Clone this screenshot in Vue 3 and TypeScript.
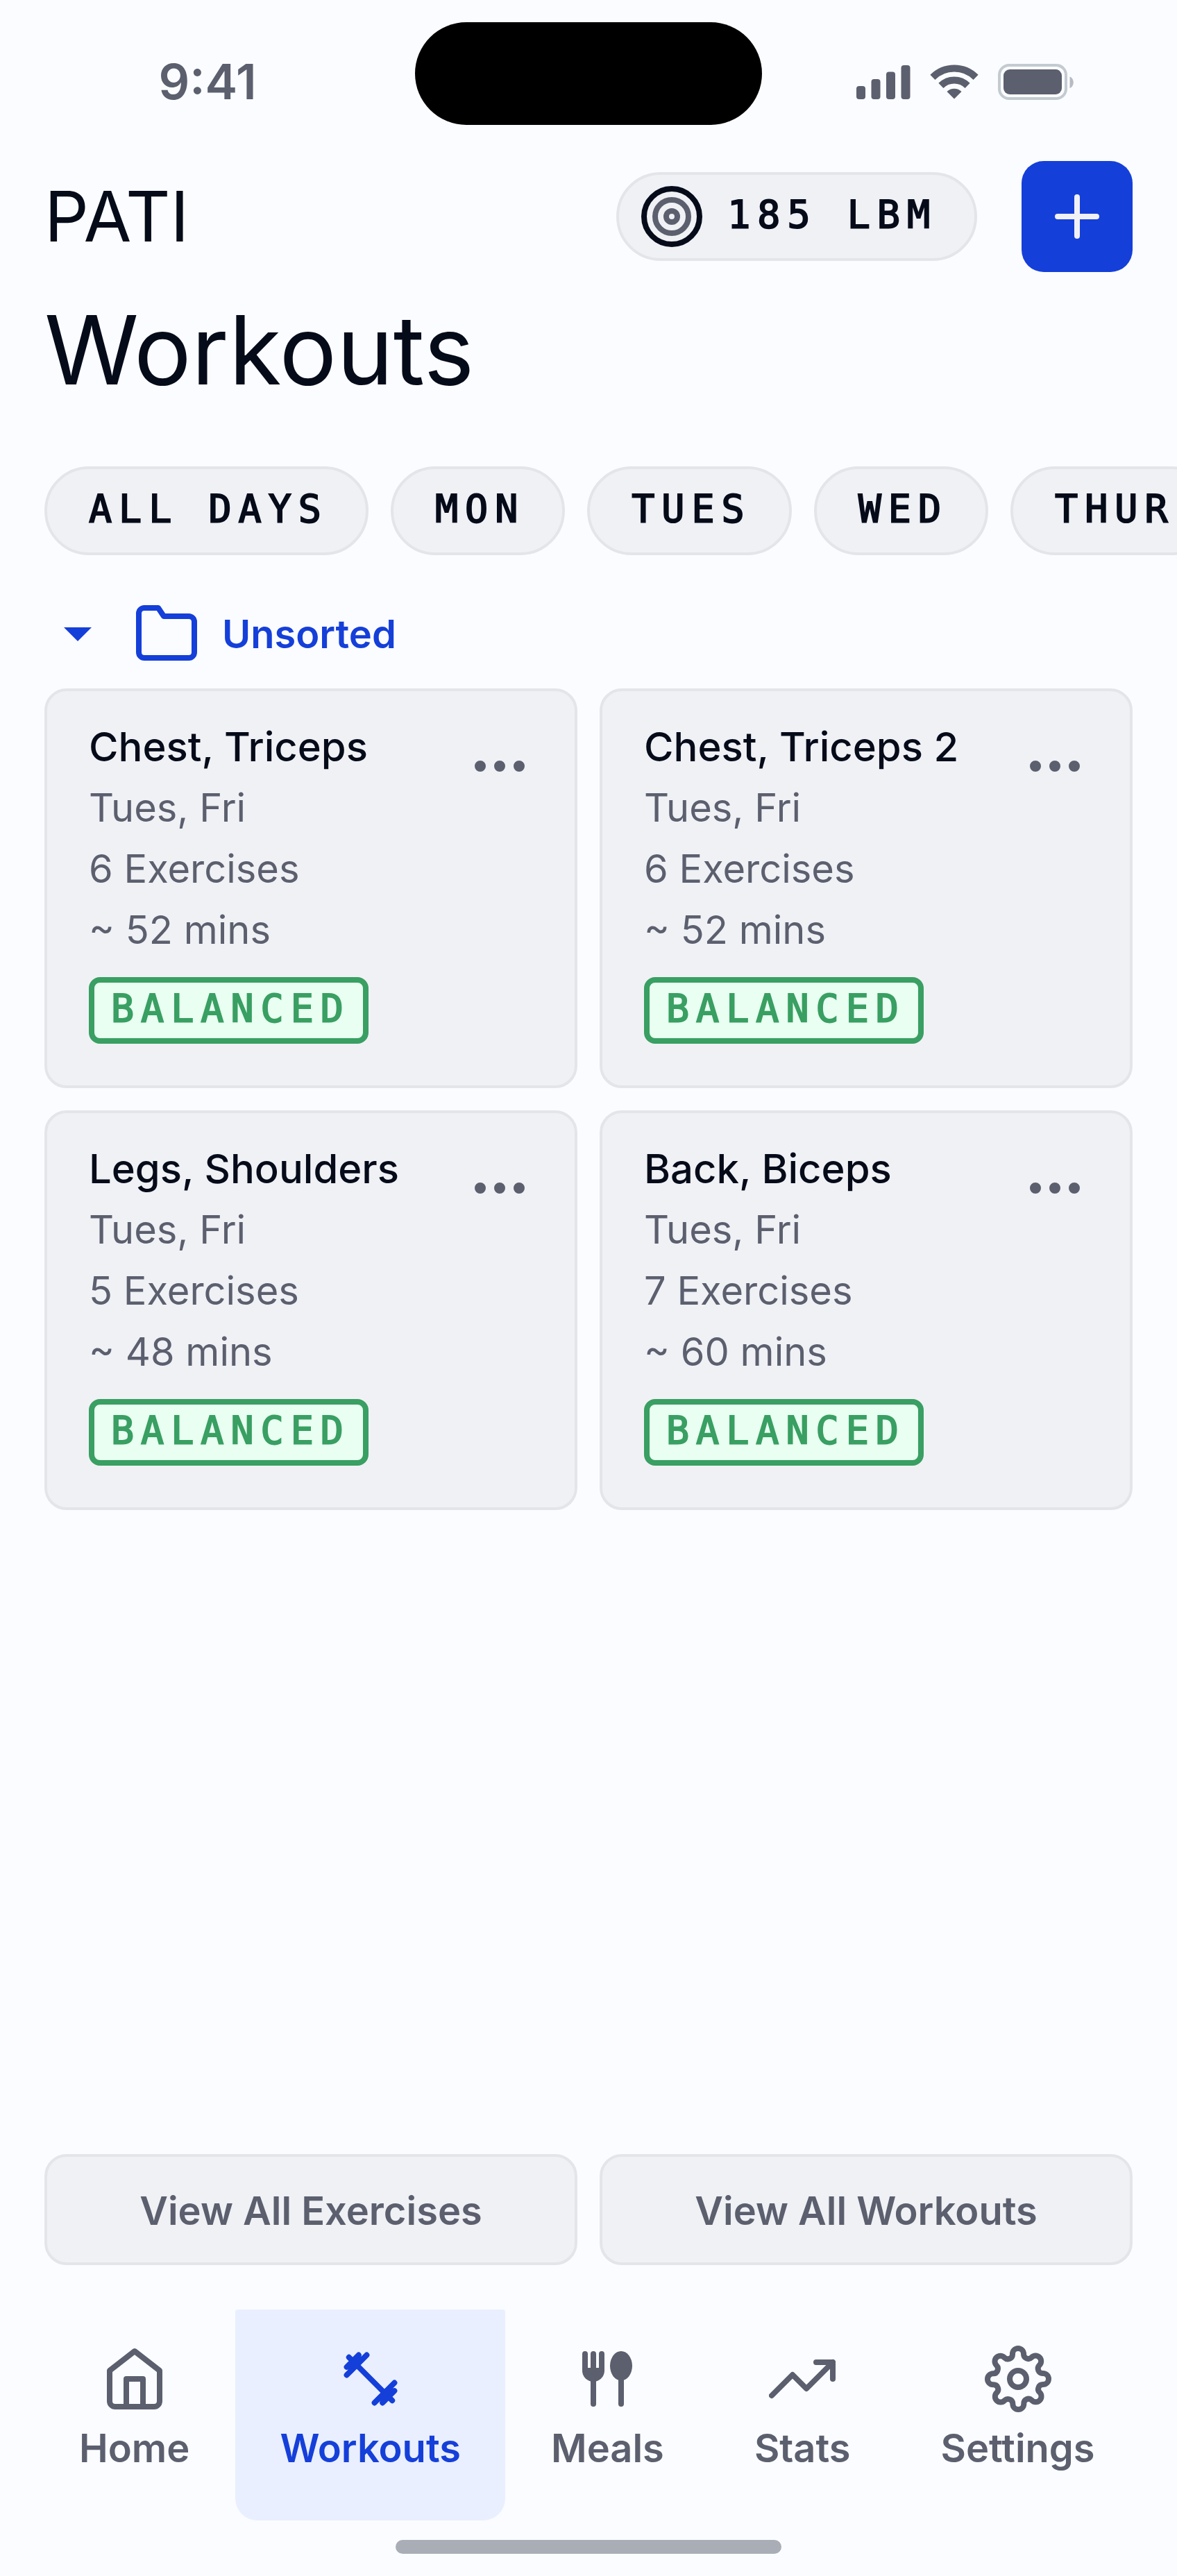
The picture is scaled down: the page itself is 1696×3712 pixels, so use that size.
<script setup lang="ts">
import { ref } from 'vue'

interface Workout {
  id: number
  name: string
  days: string
  exercises: number
  minutes: number
  tag: string
}

interface Tab {
  id: string
  label: string
}

const days: string[] = ['ALL DAYS', 'MON', 'TUES', 'WED', 'THUR']

const workouts: Workout[] = [
  { id: 1, name: 'Chest, Triceps', days: 'Tues, Fri', exercises: 6, minutes: 52, tag: 'BALANCED' },
  { id: 2, name: 'Chest, Triceps 2', days: 'Tues, Fri', exercises: 6, minutes: 52, tag: 'BALANCED' },
  { id: 3, name: 'Legs, Shoulders', days: 'Tues, Fri', exercises: 5, minutes: 48, tag: 'BALANCED' },
  { id: 4, name: 'Back, Biceps', days: 'Tues, Fri', exercises: 7, minutes: 60, tag: 'BALANCED' },
]

const tabs: Tab[] = [
  { id: 'home', label: 'Home' },
  { id: 'workouts', label: 'Workouts' },
  { id: 'meals', label: 'Meals' },
  { id: 'stats', label: 'Stats' },
  { id: 'settings', label: 'Settings' },
]

const activeTab = ref('workouts')
const folderOpen = ref(true)
</script>

<template>
  <div class="screen">
    <div class="status">
      <div class="status-side">
        <span class="time">9:41</span>
      </div>
      <div class="island"></div>
      <div class="status-side status-icons">
        <svg class="signal" viewBox="0 0 78 50" aria-hidden="true">
          <rect x="0" y="31" width="13" height="19" rx="4" />
          <rect x="21.5" y="21" width="13" height="29" rx="4" />
          <rect x="43" y="10.5" width="13" height="39.5" rx="4" />
          <rect x="64.5" y="1" width="13" height="49" rx="4" />
        </svg>
        <svg class="wifi" viewBox="0 0 70 50" aria-hidden="true">
          <path d="M3.9 18.4A44 44 0 0 1 66.1 18.4" fill="none" stroke="currentColor" stroke-width="10" />
          <path d="M15.9 30.4A27 27 0 0 1 54.1 30.4" fill="none" stroke="currentColor" stroke-width="10" />
          <path d="M24.5 39A15 15 0 0 1 45.5 39L35 49.5Z" />
        </svg>
        <svg class="battery" viewBox="0 0 110 52" aria-hidden="true">
          <rect x="2" y="2" width="96" height="48" rx="14" fill="none" stroke="#c3cbd0" stroke-width="4" />
          <rect x="8" y="8" width="84" height="36" rx="9" />
          <path d="M103.5 18.5C110.5 21 110.5 32.5 103.5 35Z" fill="#b6bbc3" />
        </svg>
      </div>
    </div>

    <header class="header">
      <span class="brand">PATI</span>
      <div class="header-actions">
        <button class="pill goal" type="button">
          <svg class="icon" viewBox="0 0 24 24" aria-hidden="true">
            <circle cx="12" cy="12" r="10" class="ring-outer" />
            <circle cx="12" cy="12" r="6" />
            <circle cx="12" cy="12" r="2" />
          </svg>
          <span class="pill-label">185 LBM</span>
        </button>
        <button class="add" type="button" aria-label="Add workout">
          <svg class="icon" viewBox="0 0 24 24" aria-hidden="true">
            <path d="M12 5v14M5 12h14" />
          </svg>
        </button>
      </div>
    </header>

    <main class="main">
      <h1 class="title">Workouts</h1>

      <div class="days">
        <button v-for="day in days" :key="day" class="pill" type="button">
          <span class="pill-label">{{ day }}</span>
        </button>
      </div>

      <button class="folder" type="button" :aria-expanded="folderOpen" @click="folderOpen = !folderOpen">
        <svg class="icon" viewBox="0 0 24 24" aria-hidden="true">
          <path d="M7 10l5 5 5-5z" class="solid" />
        </svg>
        <svg class="icon" viewBox="0 0 24 24" aria-hidden="true">
          <path d="M22 19a2 2 0 0 1-2 2H4a2 2 0 0 1-2-2V5a2 2 0 0 1 2-2h5l2 3h9a2 2 0 0 1 2 2z" />
        </svg>
        <span class="button-label">Unsorted</span>
      </button>

      <div v-if="folderOpen" class="cards">
        <article v-for="workout in workouts" :key="workout.id" class="card">
          <div class="card-body">
            <h2 class="card-title">{{ workout.name }}</h2>
            <p>{{ workout.days }}</p>
            <p>{{ workout.exercises }} Exercises</p>
            <p>~ {{ workout.minutes }} mins</p>
            <span class="tag">{{ workout.tag }}</span>
          </div>
          <button class="more" type="button" :aria-label="`Options for ${workout.name}`">
            <svg class="icon" viewBox="0 0 24 24" aria-hidden="true">
              <circle cx="5" cy="12" r="1" />
              <circle cx="12" cy="12" r="1" />
              <circle cx="19" cy="12" r="1" />
            </svg>
          </button>
        </article>
      </div>
    </main>

    <div class="view-all">
      <button type="button"><span class="button-label">View All Exercises</span></button>
      <button type="button"><span class="button-label">View All Workouts</span></button>
    </div>

    <nav class="tabs">
      <a
        v-for="tab in tabs"
        :key="tab.id"
        href="#"
        class="tab"
        :class="{ active: tab.id === activeTab }"
        :aria-current="tab.id === activeTab ? 'page' : undefined"
        @click.prevent="activeTab = tab.id"
      >
        <svg class="icon" viewBox="0 0 24 24" aria-hidden="true">
          <template v-if="tab.id === 'home'">
            <path d="M3 9l9-7 9 7v11a2 2 0 0 1-2 2H5a2 2 0 0 1-2-2z" />
            <path d="M9 22V12h6v10" />
          </template>
          <template v-else-if="tab.id === 'workouts'">
            <path d="M7.5 7.5l9 9" />
            <path d="M4.2 4.2l3 3M3.4 7.7l4.3-4.3M3.4 10.6l7.2-7.2" />
            <path d="M19.8 19.8l-3-3M20.6 16.3l-4.3 4.3M20.6 13.4l-7.2 7.2" />
            <path d="M4 10l6-6-2.3-.1-3.8 3.8zM20 14l-6 6 2.3.1 3.8-3.8z" class="solid" />
          </template>
          <template v-else-if="tab.id === 'meals'">
            <path d="M4 3v5M7 3v18M10 3v5M17 12v9" />
            <path d="M3 8h8v1a4 4 0 0 1-8 0z" class="solid" />
            <ellipse cx="17" cy="7.3" rx="4" ry="5.3" class="solid" />
          </template>
          <template v-else-if="tab.id === 'stats'">
            <path d="M23 6l-9.5 9.5-5-5L1 18" />
            <path d="M17 6h6v6" />
          </template>
          <template v-else>
            <circle cx="12" cy="12" r="3" />
            <path
              d="M19.4 15a1.65 1.65 0 0 0 .33 1.82l.06.06a2 2 0 0 1 0 2.83 2 2 0 0 1-2.83 0l-.06-.06a1.65 1.65 0 0 0-1.82-.33 1.65 1.65 0 0 0-1 1.51V21a2 2 0 0 1-2 2 2 2 0 0 1-2-2v-.09A1.65 1.65 0 0 0 9 19.4a1.65 1.65 0 0 0-1.82.33l-.06.06a2 2 0 0 1-2.83 0 2 2 0 0 1 0-2.83l.06-.06a1.65 1.65 0 0 0 .33-1.82 1.65 1.65 0 0 0-1.51-1H3a2 2 0 0 1-2-2 2 2 0 0 1 2-2h.09A1.65 1.65 0 0 0 4.6 9a1.65 1.65 0 0 0-.33-1.82l-.06-.06a2 2 0 0 1 0-2.83 2 2 0 0 1 2.83 0l.06.06a1.65 1.65 0 0 0 1.82.33H9a1.65 1.65 0 0 0 1-1.51V3a2 2 0 0 1 2-2 2 2 0 0 1 2 2v.09a1.65 1.65 0 0 0 1 1.51 1.65 1.65 0 0 0 1.82-.33l.06-.06a2 2 0 0 1 2.83 0 2 2 0 0 1 0 2.83l-.06.06a1.65 1.65 0 0 0-.33 1.82V9a1.65 1.65 0 0 0 1.51 1H21a2 2 0 0 1 2 2 2 2 0 0 1-2 2h-.09a1.65 1.65 0 0 0-1.51 1z"
            />
          </template>
        </svg>
        <span>{{ tab.label }}</span>
      </a>
    </nav>

    <div class="home-indicator"></div>
  </div>
</template>

<style>
body {
  background: #fbfcff;
}
</style>

<style scoped>
.screen {
  --ink: #060b1a;
  --muted: #5b5f6e;
  --surface: #f0f1f5;
  --line: #e3e5e9;
  --blue: #153fd9;
  --mono: 'DejaVu Sans Mono', 'Liberation Mono', monospace;
  display: flex;
  flex-direction: column;
  min-height: 100vh;
  box-sizing: border-box;
  padding-bottom: 32px;
  background: #fbfcff;
  color: var(--ink);
  font-family: Inter, 'Liberation Sans', sans-serif;
  font-size: 56px;
  line-height: 88px;
  overflow: hidden;
}

.screen *,
.screen *::before {
  box-sizing: border-box;
}

button {
  margin: 0;
  border: 0;
  padding: 0;
  background: none;
  color: inherit;
  font: inherit;
  cursor: pointer;
}

h1,
h2,
p {
  margin: 0;
  font-weight: 400;
}

.icon {
  display: block;
  flex: none;
  width: 96px;
  height: 96px;
  fill: none;
  stroke: currentColor;
  stroke-width: 2;
  stroke-linecap: round;
  stroke-linejoin: round;
}

.icon .solid {
  fill: currentColor;
  stroke: none;
}

.button-label {
  display: block;
  padding-top: 4px;
}

/* Status bar */
.status {
  display: grid;
  grid-template-columns: 1fr 500px 1fr;
  padding: 32px 0 52px;
}

.island {
  height: 148px;
  border-radius: 74px;
  background: #000;
}

.status-side {
  display: flex;
  align-items: center;
  justify-content: center;
  padding-top: 24px;
  color: var(--muted);
}

.time {
  font-size: 70px;
  font-weight: 600;
}

.status-icons {
  gap: 28px;
  padding-right: 12px;
}

.status-icons svg {
  flex: none;
  fill: currentColor;
}

.signal {
  width: 78px;
  height: 50px;
}

.wifi {
  width: 70px;
  height: 50px;
}

.battery {
  width: 110px;
  height: 52px;
}

/* Header */
.header {
  display: flex;
  align-items: center;
  justify-content: space-between;
  padding: 0 64px;
}

.brand {
  font-size: 100px;
  line-height: 160px;
}

.header-actions {
  display: flex;
  align-items: center;
  gap: 64px;
}

.pill {
  display: flex;
  flex: none;
  align-items: center;
  height: 128px;
  border: 4px solid var(--line);
  border-radius: 64px;
  padding: 0 54px 0 60px;
  background: var(--surface);
  font-family: var(--mono);
  font-size: 55px;
  line-height: 64px;
  letter-spacing: 10px;
  white-space: nowrap;
}

.pill-label {
  padding-bottom: 6px;
  -webkit-text-stroke: 2px currentColor;
}

.goal {
  gap: 32px;
  padding-left: 28px;
}

.goal .icon {
  color: var(--muted);
}

.ring-outer {
  stroke: var(--ink);
}

.add {
  display: grid;
  place-items: center;
  width: 160px;
  height: 160px;
  border-radius: 32px;
  background: var(--blue);
  color: var(--surface);
}

/* Content */
.main {
  flex: 1;
  padding: 32px 64px 64px;
}

.title {
  margin-bottom: 88px;
  font-size: 138px;
  line-height: 160px;
}

.days {
  display: flex;
  gap: 32px;
  margin-right: -64px;
  margin-bottom: 64px;
  overflow-x: auto;
  scrollbar-width: none;
}

.folder {
  display: flex;
  align-items: center;
  gap: 32px;
  height: 96px;
  margin-bottom: 32px;
  color: var(--blue);
  font-weight: 600;
}

.cards {
  display: grid;
  grid-template-columns: 1fr 1fr;
  gap: 32px;
}

.card {
  display: flex;
  align-items: flex-start;
  justify-content: space-between;
  border: 4px solid var(--line);
  border-radius: 32px;
  padding: 36px 60px 60px;
  background: var(--surface);
  color: var(--muted);
}

.card-title {
  color: var(--ink);
  font-size: 58px;
  font-weight: 500;
  white-space: nowrap;
}

.tag {
  display: block;
  width: max-content;
  height: 96px;
  margin-top: 24px;
  border: 8px solid #399f62;
  border-radius: 16px;
  padding: 0 18px 0 24px;
  background: #e8fff1;
  color: #399f62;
  font-family: var(--mono);
  font-size: 55px;
  line-height: 74px;
  letter-spacing: 10px;
  -webkit-text-stroke: 2px currentColor;
}

.more {
  margin-top: 24px;
}

/* Bottom actions */
.view-all {
  display: grid;
  grid-template-columns: 1fr 1fr;
  gap: 32px;
  padding: 0 64px 64px;
}

.view-all button {
  height: 160px;
  border: 4px solid var(--line);
  border-radius: 32px;
  background: var(--surface);
  color: var(--muted);
  font-weight: 600;
}

/* Tab bar */
.tabs {
  display: flex;
  gap: 2px;
  padding: 0 50px;
}

.tab {
  display: flex;
  flex-direction: column;
  align-items: center;
  gap: 8px;
  border-radius: 4px 4px 32px 32px;
  padding: 52px 64px 60px;
  color: var(--muted);
  font-weight: 600;
  text-decoration: none;
}

.tab.active {
  background: #e9efff;
  color: var(--blue);
}

.home-indicator {
  align-self: center;
  width: 556px;
  height: 20px;
  margin-top: 28px;
  border-radius: 10px;
  background: #a9adb6;
}
</style>
